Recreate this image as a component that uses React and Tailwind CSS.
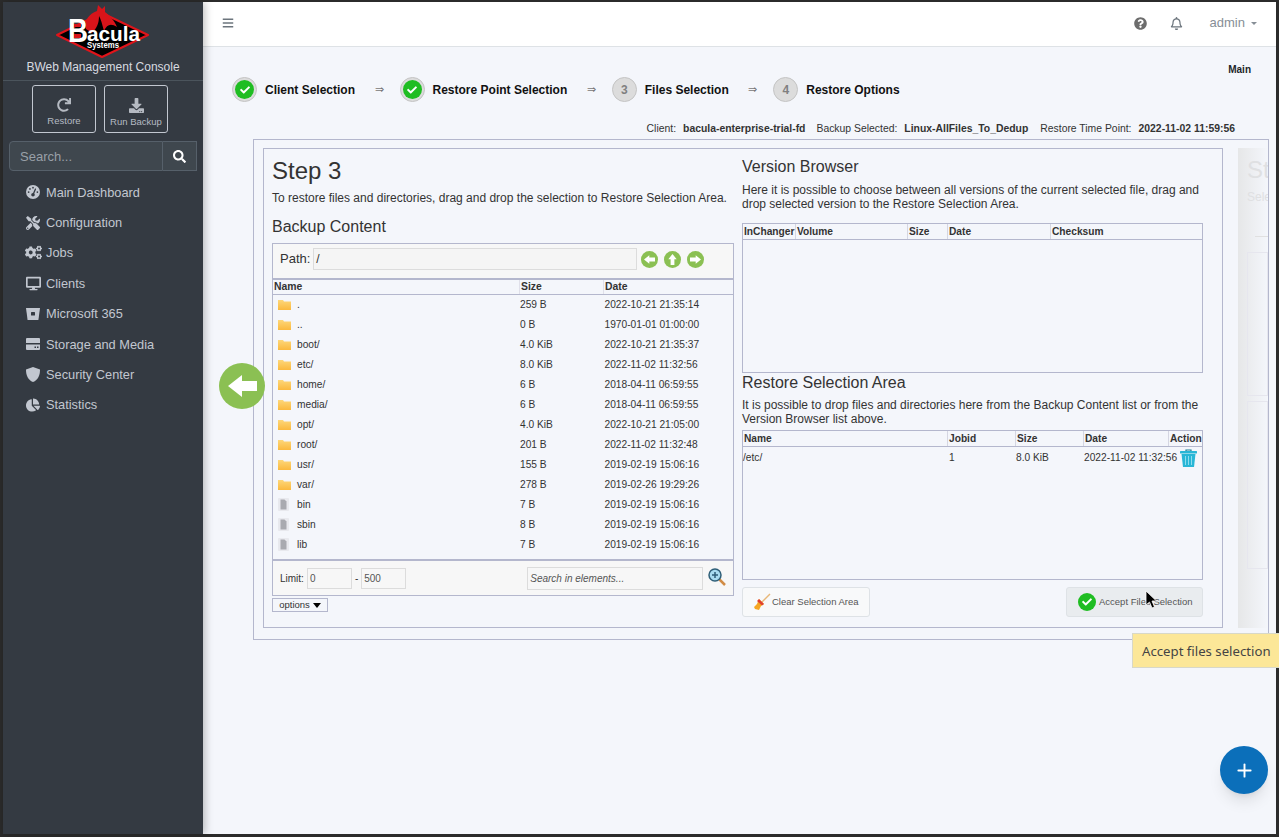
import { FaTools, FaCogs, FaDesktop, FaChartPie, FaRedo, FaDownload, FaSearch, FaQuestionCircle, FaRegBell, FaBars, FaCheck } from "react-icons/fa";
import { FaGaugeHigh } from "react-icons/fa6";
import { Plus } from "lucide-react";

const navItems = [
  { label: "Main Dashboard", icon: <FaGaugeHigh className="text-[14px]" /> },
  { label: "Configuration", icon: <FaTools className="text-[14px]" /> },
  { label: "Jobs", icon: <FaCogs className="text-[17px]" /> },
  { label: "Clients", icon: <FaDesktop className="text-[15px]" /> },
  { label: "Microsoft 365", icon: <BucketIcon /> },
  { label: "Storage and Media", icon: <DriveIcon /> },
  { label: "Security Center", icon: <ShieldIcon /> },
  { label: "Statistics", icon: <FaChartPie className="text-[14px]" /> },
];

const files = [
  { name: ".", size: "259 B", date: "2022-10-21 21:35:14", dir: true },
  { name: "..", size: "0 B", date: "1970-01-01 01:00:00", dir: true },
  { name: "boot/", size: "4.0 KiB", date: "2022-10-21 21:35:37", dir: true },
  { name: "etc/", size: "8.0 KiB", date: "2022-11-02 11:32:56", dir: true },
  { name: "home/", size: "6 B", date: "2018-04-11 06:59:55", dir: true },
  { name: "media/", size: "6 B", date: "2018-04-11 06:59:55", dir: true },
  { name: "opt/", size: "4.0 KiB", date: "2022-10-21 21:05:00", dir: true },
  { name: "root/", size: "201 B", date: "2022-11-02 11:32:48", dir: true },
  { name: "usr/", size: "155 B", date: "2019-02-19 15:06:16", dir: true },
  { name: "var/", size: "278 B", date: "2019-02-26 19:29:26", dir: true },
  { name: "bin", size: "7 B", date: "2019-02-19 15:06:16" },
  { name: "sbin", size: "8 B", date: "2019-02-19 15:06:16" },
  { name: "lib", size: "7 B", date: "2019-02-19 15:06:16" },
  { name: "", size: "", date: "" },
];

function BucketIcon() {
  return (
    <svg width="14" height="14" viewBox="0 0 14 14">
      <path d="M0 1h14l-1.6 12H1.600z" fill="currentColor" />
      <rect x="5" y="5" width="4" height="3.500" rx="0.500" fill="#343a42" />
    </svg>
  );
}

function DriveIcon() {
  return (
    <svg width="14" height="12" viewBox="0 0 14 12">
      <path d="M1 0h12a1 1 0 0 1 1 1v4H0V1a1 1 0 0 1 1-1z" fill="currentColor" />
      <path d="M0 6.500h14V11a1 1 0 0 1-1 1H1a1 1 0 0 1-1-1z" fill="currentColor" />
      <rect x="8.500" y="8.500" width="1.500" height="1.500" fill="#343a42" />
      <rect x="11" y="8.500" width="1.500" height="1.500" fill="#343a42" />
    </svg>
  );
}

function ShieldIcon() {
  return (
    <svg width="14" height="15" viewBox="0 0 14 15">
      <path d="M7 0l7 2.500c0 6-2 10.500-7 12.500C2 13 0 8.500 0 2.500z" fill="currentColor" />
    </svg>
  );
}

function Logo() {
  return (
    <svg width="94" height="56" viewBox="0 0 94 56" className="block">
      <polygon points="46,8 92,30 46,52 1,30" fill="#000" stroke="#e0141a" strokeWidth="2" strokeLinejoin="round" />
      <path d="M30 24C28 15 33 9 41 6L42 0L46 4L49 1L49 7C54 11 58 15 61 22C55 18 51 19 48 26C46 19 45 14 43 11C43 18 41 23 36 28Z" fill="#d8141a" />
      <text x="12" y="37" fill="#fff" fontSize="33" fontWeight="700" fontFamily="Liberation Sans, sans-serif" textLength="20" lengthAdjust="spacingAndGlyphs">B</text>
      <rect x="18" y="19" width="7" height="3" fill="#d8141a" />
      <rect x="18" y="29" width="7" height="4" fill="#d8141a" />
      <text x="31" y="36" fill="#fff" fontSize="20" fontWeight="700" fontFamily="Liberation Sans, sans-serif" textLength="53" lengthAdjust="spacingAndGlyphs">acula</text>
      <text x="31" y="43" fill="#fff" fontSize="8.500" fontWeight="700" fontFamily="Liberation Sans, sans-serif" textLength="32" lengthAdjust="spacingAndGlyphs">Systems</text>
    </svg>
  );
}

function FolderIcon() {
  return (
    <svg width="13" height="11" viewBox="0 0 13 11">
      <defs>
        <linearGradient id="folderFill" x1="0" y1="0" x2="0" y2="1">
          <stop offset="0" stopColor="#fdd77a" />
          <stop offset="1" stopColor="#fbb93e" />
        </linearGradient>
      </defs>
      <path d="M0 1h5l1 1.500h7V11H0z" fill="url(#folderFill)" />
    </svg>
  );
}

function FileIcon() {
  return (
    <svg width="11" height="13" viewBox="0 0 11 13">
      <rect x="0" y="0" width="11" height="13" rx="1" fill="#e8e9ee" />
      <path d="M2.500 1.500h4l2 2v8h-6z" fill="#a9aab0" />
    </svg>
  );
}

function BlockArrow({ className }) {
  return (
    <svg viewBox="0 0 29 22" className={className}>
      <polygon points="0,11 14,0 14,6 29,6 29,16 14,16 14,22" fill="#fff" />
    </svg>
  );
}

function TrashIcon() {
  return (
    <svg width="17" height="18" viewBox="0 0 17 18">
      <path d="M6 2V1h5v1" fill="none" stroke="#1c7f96" strokeWidth="1.200" />
      <rect x="0" y="2" width="17" height="2.500" rx="0.500" fill="#29b6d6" />
      <path d="M1.500 5h14L14 18H3z" fill="#29b6d6" />
      <path d="M5.500 7v9M8.500 7v9M11.500 7v9" stroke="#8ddcee" strokeWidth="1" />
    </svg>
  );
}

function GreenCheck({ size = "w-[19px] h-[19px]" }) {
  return (
    <span className={`${size} rounded-full bg-[#1fbd22] flex items-center justify-center text-white`}>
      <FaCheck className="text-[10px]" />
    </span>
  );
}

function Step({ done, num, label }) {
  return (
    <div className="flex items-center gap-[8px]">
      <span className="w-[25px] h-[25px] rounded-full bg-[#dcdcdc] border border-[#c4c4c4] flex items-center justify-center text-[12px] font-bold text-[#808080]">
        {done ? <GreenCheck /> : num}
      </span>
      <span className="text-[12px] font-bold text-[#111]">{label}</span>
    </div>
  );
}

function Arrow() {
  return <span className="text-[11px] text-[#777] ml-[19.5px] mr-[16px]">⇒</span>;
}

function RoundButton({ children }) {
  return (
    <span className="w-[17px] h-[17px] rounded-full bg-[#8bc053] flex items-center justify-center">
      {children}
    </span>
  );
}

export default function App() {
  return (
    <div className="w-[1279px] h-[837px] overflow-hidden bg-[#2b2b2b] pt-[2px] pl-[3px] pr-[3px] pb-[3px] relative" style={{ fontFamily: '"Liberation Sans", Arial, sans-serif' }}>
      <div className="flex h-full">
        {/* ---------- Sidebar ---------- */}
        <aside className="w-[200px] shrink-0 bg-[#343a42] text-[#c2c7d0] relative z-10 shadow-[2px_0_8px_rgba(0,0,0,0.25)]">
          <div className="h-[79px] border-b border-[#4b545c] flex flex-col items-center">
            <div className="h-[58px] pt-[3px]"><Logo /></div>
            <div className="text-[12px] text-[#d8dbe0] leading-[14px]">BWeb Management Console</div>
          </div>
          <div className="flex gap-[8px] mt-[4px] ml-[29px]">
            <button className="w-[64px] h-[48px] border border-[#c2c7d0] rounded-[3px] flex flex-col items-center pt-[12px] text-[9.5px] text-[#b5bac2]">
              <FaRedo className="text-[14px] mb-[2px]" />
              Restore
            </button>
            <button className="w-[64px] h-[48px] border border-[#c2c7d0] rounded-[3px] flex flex-col items-center pt-[12px] text-[9.5px] text-[#b5bac2]">
              <FaDownload className="text-[15px] mb-[2px]" />
              Run Backup
            </button>
          </div>
          <div className="flex ml-[6px] mt-[8px] w-[188px] h-[30px]">
            <div className="flex-1 bg-[#3f474e] border border-[#56606a] rounded-l-[4px] text-[13px] text-[#99a0a8] px-[10px] leading-[30px]">Search...</div>
            <div className="w-[34px] bg-[#3f474e] border border-l-0 border-[#56606a] flex items-center justify-center text-white text-[13px]"><FaSearch /></div>
          </div>
          <nav className="mt-[6px]">
            {navItems.map((item) => (
              <div key={item.label} className="h-[30.4px] flex items-center text-[12.8px] text-[#c2c7d0]">
                <span className="w-[43px] pl-[20px] pr-[3px] flex justify-center shrink-0">{item.icon}</span>
                {item.label}
              </div>
            ))}
          </nav>
        </aside>

        {/* ---------- Main ---------- */}
        <main className="flex-1 min-w-0 bg-[#f4f6fb]">
          <header className="h-[45px] bg-white border-b border-[#dee2e6] flex items-center pb-[2px] pl-[19px] pr-[19px] text-[#6c757d]">
            <FaBars className="text-[12px]" />
            <div className="ml-auto flex items-center">
              <FaQuestionCircle className="text-[13px] text-[#6d6d6d]" />
              <FaRegBell className="text-[13px] ml-[23px]" />
              <span className="text-[13px] ml-[27px] text-[#868e96]">admin</span>
              <span className="ml-[6px] border-x-[3px] border-t-[3px] border-x-transparent border-t-[#868e96]"></span>
            </div>
          </header>

          <div className="relative h-[788px]">
            <div className="flex justify-end pr-[25px] pt-[17px] text-[10px] font-bold text-[#212529] leading-[12px]">Main</div>

            <div className="flex items-center pl-[29px] mt-[1px]">
              <Step done label="Client Selection" />
              <Arrow />
              <Step done label="Restore Point Selection" />
              <Arrow />
              <Step num="3" label="Files Selection" />
              <Arrow />
              <Step num="4" label="Restore Options" />
            </div>

            <div className="flex justify-end pr-[41px] mt-[21px] text-[10.4px] leading-[12px] text-[#333] gap-[7px]">
              <span>Client:</span>
              <b className="mr-[4px]">bacula-enterprise-trial-fd</b>
              <span>Backup Selected:</span>
              <b className="mr-[5px]">Linux-AllFiles_To_Dedup</b>
              <span>Restore Time Point:</span>
              <b>2022-11-02 11:59:56</b>
            </div>

            {/* ---------- Wizard box ---------- */}
            <div className="ml-[50px] mt-[4px] w-[1016px] h-[501px] border border-[#b4b7cd] flex pt-[8px] pl-[9px] overflow-hidden">
              <div className="w-[960px] h-[480px] border border-[#b4b7cd] shrink-0 flex pl-[8px] pr-[19px] gap-[8px]">
                {/* ---------- Left column ---------- */}
                <div className="w-[462px] shrink-0 text-[#333]">
                  <h2 className="text-[24px] leading-[28px] mt-[8px]">Step 3</h2>
                  <p className="text-[12px] leading-[14px] mt-[6px]">To restore files and directories, drag and drop the selection to Restore Selection Area.</p>
                  <h3 className="text-[16px] leading-[18px] mt-[13px]">Backup Content</h3>
                  <div className="mt-[7px] border border-[#b4b7cd] h-[353px] flex flex-col">
                    <div className="h-[36px] bg-[#f7f7f7] border-b-2 border-[#b4b7cd] flex items-center pl-[7px] pb-[4px] shrink-0">
                      <span className="text-[13px] mr-[3px]">Path:</span>
                      <div className="w-[324px] h-[22px] bg-[#f5f5f5] border border-[#dcdcdc] text-[12px] leading-[20px] px-[2px]">/</div>
                      <div className="flex gap-[6px] ml-[4px]">
                        <RoundButton><BlockArrow className="w-[11px] h-[9px]" /></RoundButton>
                        <RoundButton><BlockArrow className="w-[11px] h-[9px] rotate-90" /></RoundButton>
                        <RoundButton><BlockArrow className="w-[11px] h-[9px] rotate-180" /></RoundButton>
                      </div>
                    </div>
                    <div className="grid grid-cols-[247px_84px_1fr] h-[15px] border-b border-[#b4b7cd] text-[10.4px] font-bold leading-[14px] shrink-0">
                      <span className="pl-[1px] border-r border-[#e0e0ea]">Name</span>
                      <span className="pl-[1px] border-r border-[#e0e0ea]">Size</span>
                      <span className="pl-[1px]">Date</span>
                    </div>
                    <div className="flex-1 min-h-0 overflow-hidden">
                      {files.map((f) => (
                        <div key={f.name} className="grid grid-cols-[247px_84px_1fr] h-[20px] items-center text-[10.2px]">
                          <span className="flex items-center">
                            <span className="w-[24px] pl-[5px] flex shrink-0">{f.dir ? <FolderIcon /> : <FileIcon />}</span>
                            {f.name}
                          </span>
                          <span>{f.size}</span>
                          <span className="pl-[0.5px]">{f.date}</span>
                        </div>
                      ))}
                    </div>
                    <div className="h-[36px] bg-[#f7f7f7] border-t-2 border-[#b4b7cd] flex items-center pl-[7px] text-[10px] shrink-0">
                      <span className="mr-[3px]">Limit:</span>
                      <div className="w-[45px] h-[21px] border border-[#dcdcdc] px-[2px] leading-[19px] text-[#555]">0</div>
                      <span className="mx-[3px]">-</span>
                      <div className="w-[45px] h-[21px] border border-[#dcdcdc] px-[2px] leading-[19px] text-[#555]">500</div>
                      <div className="w-[176px] h-[23px] ml-[121px] border border-[#dcdcdc] px-[2px] leading-[21px] italic text-[#555]">Search in elements...</div>
                      <svg width="18" height="18" viewBox="0 0 18 18" className="ml-[5px] mb-[3px]">
                        <line x1="11" y1="11" x2="17" y2="17" stroke="#d18c45" strokeWidth="2.500" />
                        <circle cx="7" cy="7" r="6" fill="#a8dcf0" stroke="#2f5f78" strokeWidth="1.500" />
                        <path d="M4 7h6M7 4v6" stroke="#2f5f78" strokeWidth="1.500" />
                      </svg>
                    </div>
                  </div>
                  <button className="mt-[2px] w-[56px] h-[14px] border border-[#b4b7cd] text-[9.5px] leading-[12px] flex items-center justify-center gap-[3px] text-[#333]">
                    options
                    <span className="border-x-[4px] border-t-[5px] border-x-transparent border-t-black"></span>
                  </button>
                </div>

                {/* ---------- Right column ---------- */}
                <div className="flex-1 min-w-0 text-[#333]">
                  <h3 className="text-[16px] leading-[18px] mt-[9px]">Version Browser</h3>
                  <p className="text-[12px] leading-[14px] mt-[7px]">Here it is possible to choose between all versions of the current selected file, drag and drop selected version to the Restore Selection Area.</p>
                  <div className="mt-[12px] h-[150px] border border-[#b4b7cd]">
                    <div className="grid grid-cols-[53px_112px_40px_103px_1fr] h-[16px] border-b border-[#b4b7cd] text-[10.2px] font-bold leading-[15px]">
                      <span className="pl-[1px] border-r border-[#d5d6e2]">InChanger</span>
                      <span className="pl-[1px] border-r border-[#d5d6e2]">Volume</span>
                      <span className="pl-[1px] border-r border-[#d5d6e2]">Size</span>
                      <span className="pl-[1px] border-r border-[#d5d6e2]">Date</span>
                      <span className="pl-[1px]">Checksum</span>
                    </div>
                  </div>
                  <h3 className="text-[16px] leading-[18px] mt-[1px]">Restore Selection Area</h3>
                  <p className="text-[12px] leading-[14px] mt-[6px]">It is possible to drop files and directories here from the Backup Content list or from the Version Browser list above.</p>
                  <div className="mt-[4px] h-[150px] border border-[#b4b7cd]">
                    <div className="grid grid-cols-[205px_68px_68px_85px_1fr] h-[16px] border-b border-[#b4b7cd] text-[10.2px] font-bold leading-[15px]">
                      <span className="pl-[1px] border-r border-[#d5d6e2]">Name</span>
                      <span className="pl-[1px] border-r border-[#d5d6e2]">Jobid</span>
                      <span className="pl-[1px] border-r border-[#d5d6e2]">Size</span>
                      <span className="pl-[1px] border-r border-[#d5d6e2]">Date</span>
                      <span className="pl-[1px]">Action</span>
                    </div>
                    <div className="grid grid-cols-[205px_68px_68px_85px_1fr] h-[22px] items-center text-[10.2px]">
                      <span>/etc/</span>
                      <span className="pl-[1px]">1</span>
                      <span>8.0 KiB</span>
                      <span className="whitespace-nowrap">2022-11-02 11:32:56</span>
                      <span className="flex justify-center pl-[6px]"><TrashIcon /></span>
                    </div>
                  </div>
                  <div className="flex justify-between mt-[7px]">
                    <button className="w-[128px] h-[30px] bg-[#f8f9fa] border border-[#dee2e6] rounded-[3px] flex items-center pl-[10px] text-[9.5px] text-[#555]">
                      <svg width="18" height="20" viewBox="0 0 18 18" className="mr-[1px]">
                        <line x1="8" y1="10" x2="17" y2="1" stroke="#e8b878" strokeWidth="1.500" />
                        <path d="M6 6l5 5-3 2-2 4-4-1-1-2 3-3z" fill="#f5a623" />
                        <path d="M6 6l5 5-2 1.500-5-4.500z" fill="#e04030" />
                      </svg>
                      Clear Selection Area
                    </button>
                    <button className="w-[137px] h-[30px] bg-[#e9ecef] border border-[#dee2e6] rounded-[3px] flex items-center pl-[11px] text-[9.5px] text-[#555] gap-[3px]">
                      <GreenCheck size="w-[18px] h-[18px]" />
                      Accept Files Selection
                    </button>
                  </div>
                </div>
              </div>

              {/* ---------- Next step, faded ---------- */}
              <div className="ml-[15px] w-[30px] h-[480px] shrink-0 bg-gradient-to-r from-[#e6e7e8] to-[#f4f6fb] overflow-hidden pl-[9px] text-[#dfe0e2] whitespace-nowrap">
                <div className="text-[24px] leading-[28px] mt-[8px]">Step 4</div>
                <div className="text-[12px] leading-[14px] mt-[6px]">Select</div>
                <div className="ml-[8px] mt-[32px] h-px bg-[#e0e0e0]"></div>
                <div className="mt-[15px] w-full h-[144px] border border-[#e6e6ee]"></div>
                <div className="mt-[5px] w-full h-[168px] border border-[#e6e6ee]"></div>
              </div>
            </div>

            {/* ---------- Overlays ---------- */}
            <span className="absolute left-[16px] top-[316px] w-[46px] h-[46px] rounded-full bg-[#8bc053] flex items-center justify-center"><BlockArrow className="w-[29px] h-[22px]" /></span>
            <div className="absolute left-[929px] top-[586px] w-[148px] h-[35px] bg-[#fce798] border border-[#d8d8c8] text-[13.2px] leading-[34px] pl-[9px] text-[#444] whitespace-nowrap" style={{ fontFamily: '"Noto Sans", sans-serif' }}>Accept files selection</div>
            <span className="absolute left-[1017px] top-[699px] w-[48px] h-[48px] rounded-full bg-[#0b6fba] text-white flex items-center justify-center shadow-lg"><Plus size={21} strokeWidth={2.2} /></span>
            <svg width="12" height="19" viewBox="0 0 12 19" className="absolute left-[942px] top-[543px]">
              <path d="M1 1v14l3.500-3 2.500 6 2.500-1-2.500-6h4.500z" fill="#000" stroke="#fff" strokeWidth="0.800" />
            </svg>
          </div>
        </main>
      </div>
    </div>
  );
}
